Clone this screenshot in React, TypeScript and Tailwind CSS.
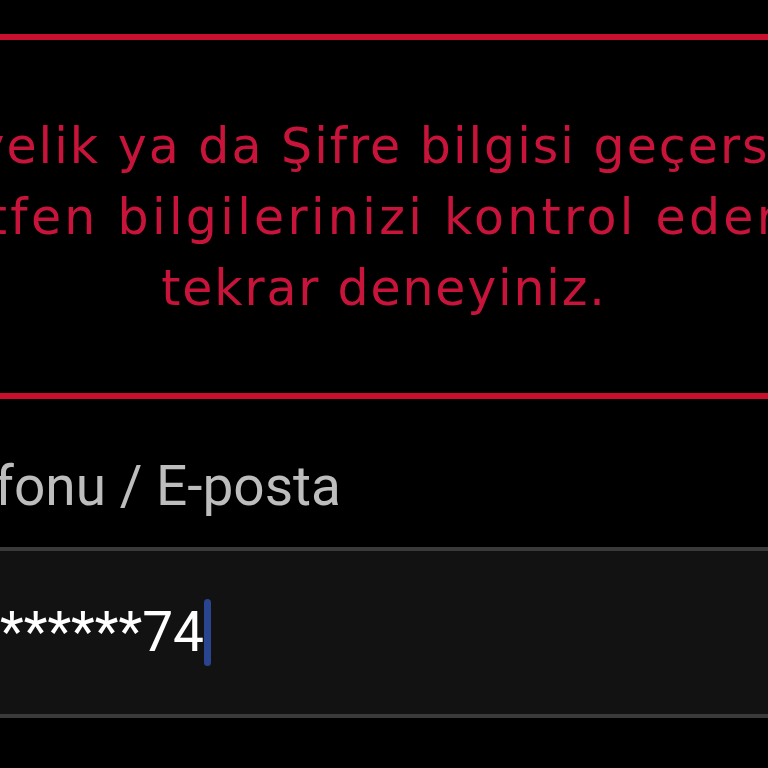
import React from "react";

export default function App() {
  return (
    <div className="w-[768px] h-[768px] bg-black overflow-hidden flex flex-col">
      <div className="h-[34px] shrink-0" />
      <div className="h-[6px] bg-[#c8102e] shrink-0" />
      <div
        className="shrink-0 h-[353px] flex flex-col items-center justify-center text-[#c8143a] text-[49px] leading-[71px] whitespace-nowrap tracking-[1.8px] pt-[2px]"
        style={{ fontFamily: "'DejaVu Sans', Lato, sans-serif" }}
      >
        <div className="tracking-[2px]">Üyelik ya da Şifre bilgisi geçersiz.</div>
        <div className="tracking-[3.3px]">Lütfen bilgilerinizi kontrol ederek</div>
        <div>tekrar deneyiniz.</div>
      </div>
      <div className="h-[6px] bg-[#c8102e] shrink-0" />
      <div
        className="shrink-0 h-[148px] flex items-center"
        style={{ fontFamily: "Roboto, 'Liberation Sans', sans-serif" }}
      >
        <div className="w-[341px] flex justify-end whitespace-nowrap text-[55px] text-[#bdbdbd] leading-none pt-[26px]">
          <span>Cep Telefonu / E-posta</span>
        </div>
      </div>
      <div
        className="shrink-0 h-[171px] bg-[#121212] border-t-[4px] border-b-[4px] border-[#3a3a3a] flex items-center"
        style={{ fontFamily: "Roboto, 'Liberation Sans', sans-serif" }}
      >
        <div className="w-[204px] flex justify-end whitespace-nowrap text-[55px] text-white leading-none">
          <span>05*******74</span>
        </div>
        <div className="w-[7px] h-[67px] rounded-full bg-[#2a4590]" />
      </div>
    </div>
  );
}
